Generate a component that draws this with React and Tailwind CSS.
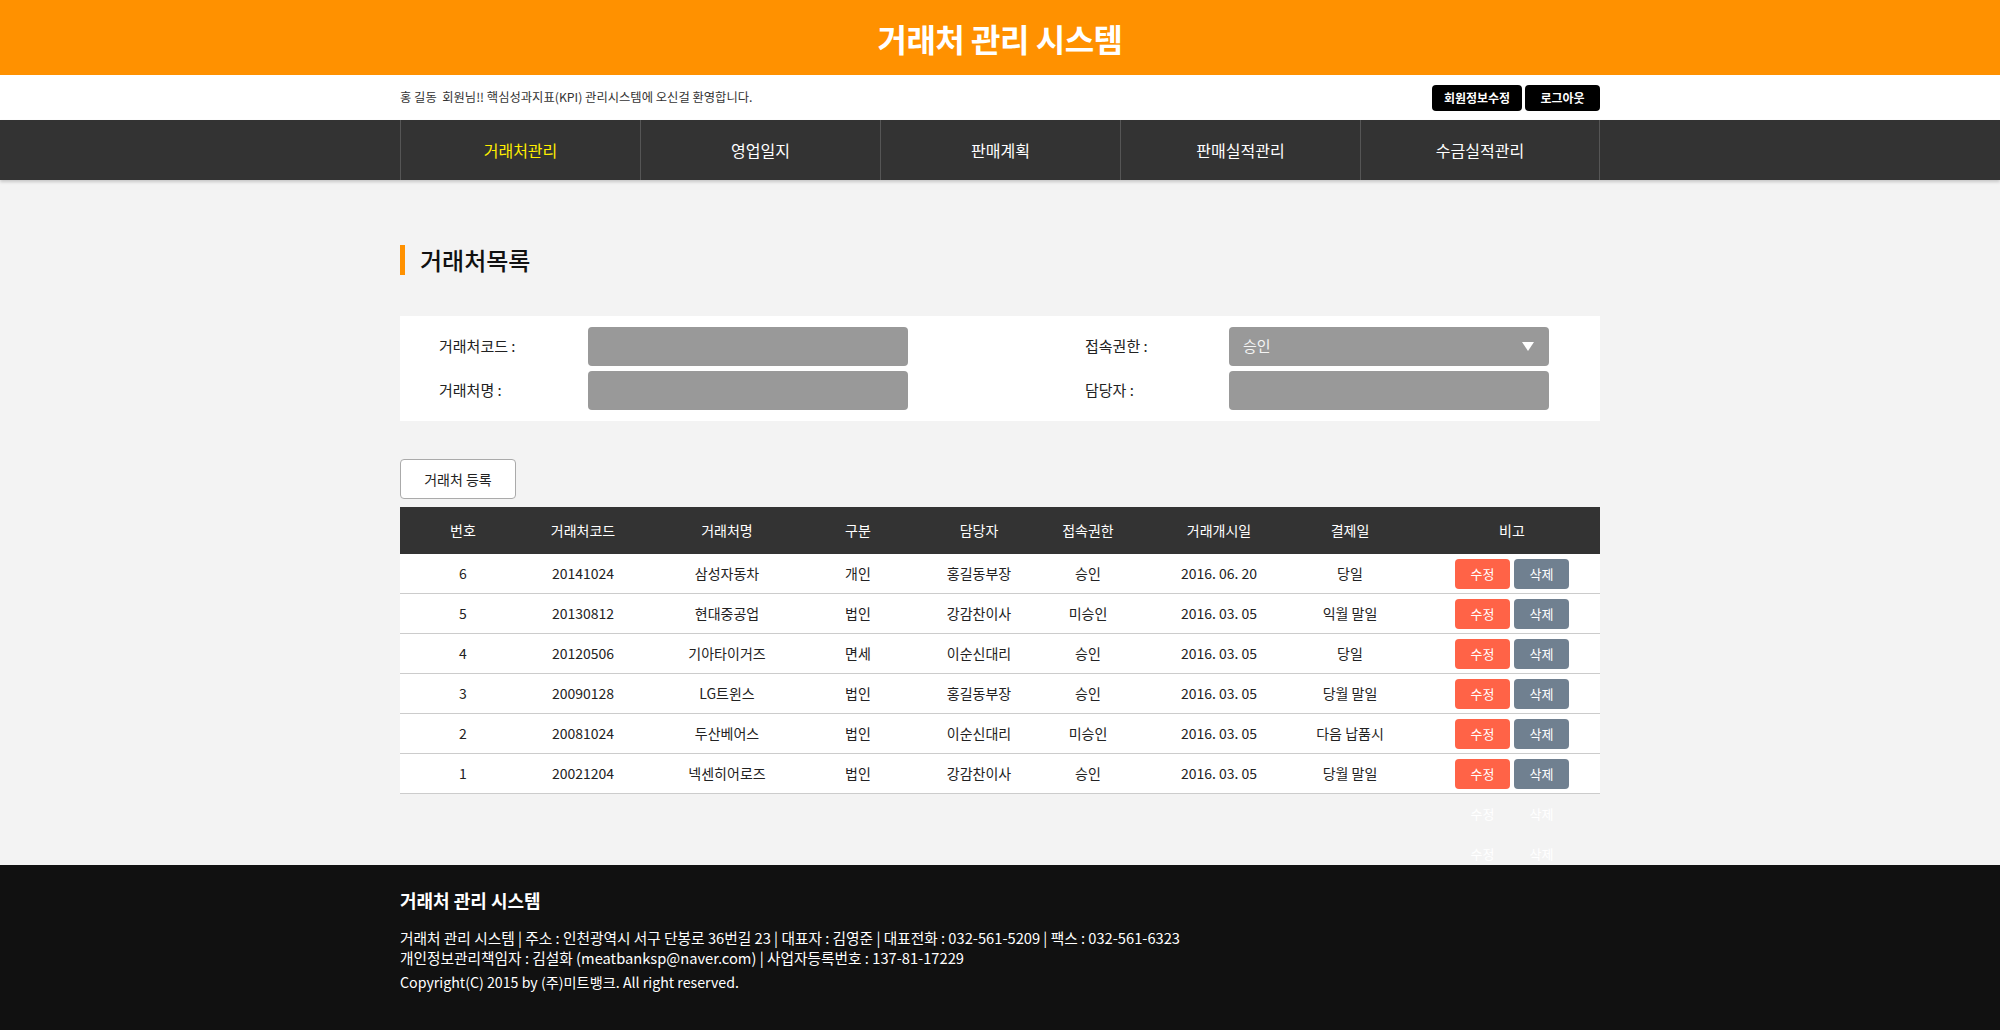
const rows = [
  ['6', '20141024', '삼성자동차', '개인', '홍길동부장', '승인', '2016. 06. 20', '당일'],
  ['5', '20130812', '현대중공업', '법인', '강감찬이사', '미승인', '2016. 03. 05', '익월 말일'],
  ['4', '20120506', '기아타이거즈', '면세', '이순신대리', '승인', '2016. 03. 05', '당일'],
  ['3', '20090128', 'LG트윈스', '법인', '홍길동부장', '승인', '2016. 03. 05', '당월 말일'],
  ['2', '20081024', '두산베어스', '법인', '이순신대리', '미승인', '2016. 03. 05', '다음 납품시'],
  ['1', '20021204', '넥센히어로즈', '법인', '강감찬이사', '승인', '2016. 03. 05', '당월 말일'],
];

const heads = ['번호', '거래처코드', '거래처명', '구분', '담당자', '접속권한', '거래개시일', '결제일'];

const menus = ['거래처관리', '영업일지', '판매계획', '판매실적관리', '수금실적관리'];

// column widths chosen so each cell centre lands where the original does
const grid = 'grid grid-cols-[126px_114px_174px_88px_154px_64px_198px_64px_218px]';

function Cell({ children }) {
  return <div className="flex items-center justify-center whitespace-nowrap">{children}</div>;
}

function Actions({ ghost }) {
  return (
    <div className="flex items-center justify-center gap-[4px] pl-[42px]">
      <button
        type="button"
        className={
          ghost
            ? 'h-[30px] w-[55px] rounded-[4px] text-[13px] text-white'
            : 'h-[30px] w-[55px] rounded-[4px] bg-[#ff6347] text-[13px] text-white'
        }
      >
        수정
      </button>
      <button
        type="button"
        className={
          ghost
            ? 'h-[30px] w-[55px] rounded-[4px] text-[13px] text-white'
            : 'h-[30px] w-[55px] rounded-[4px] bg-[#708090] text-[13px] text-white'
        }
      >
        삭제
      </button>
    </div>
  );
}

export default function App() {
  return (
    <div className="min-h-screen bg-[#f3f3f3] font-['Noto_Sans_CJK_KR',sans-serif] text-[#222]">
      <header className="flex h-[75px] items-center justify-center bg-[#ff9100]">
        <h1 className="text-[32px] font-bold tracking-[-0.5px] text-white">거래처 관리 시스템</h1>
      </header>

      <div className="h-[45px] bg-white">
        <div className="mx-auto flex h-full w-[1200px] items-center justify-between">
          <p className="text-[12.3px] text-[#333]">홍 길동&nbsp; 회원님!! 핵심성과지표(KPI) 관리시스템에 오신걸 환영합니다.</p>
          <div className="flex gap-[3px]">
            <button type="button" className="h-[26px] w-[90px] rounded-[4px] bg-black text-[12px] font-bold text-white">
              회원정보수정
            </button>
            <button type="button" className="h-[26px] w-[75px] rounded-[4px] bg-black text-[12px] font-bold text-white">
              로그아웃
            </button>
          </div>
        </div>
      </div>

      <nav className="relative h-[60px] bg-[#333] shadow-[0_2px_3px_rgba(0,0,0,0.18)]">
        <ul className="mx-auto grid h-full w-[1200px] grid-cols-5">
          {menus.map((m, i) => (
            <li
              key={m}
              className={
                i === menus.length - 1
                  ? 'flex items-center justify-center border-x border-[#555] text-[16px] text-white'
                  : 'flex items-center justify-center border-l border-[#555] text-[16px] ' +
                    (i === 0 ? 'text-[#ffee00]' : 'text-white')
              }
            >
              {m}
            </li>
          ))}
        </ul>
      </nav>

      <main className="h-[685px] overflow-hidden">
        <div className="mx-auto w-[1200px] pt-[65px]">
          <h2 className="flex h-[30px] items-center border-l-[5px] border-[#ff9100] pl-[15px] text-[24px] font-medium text-[#111]">
            거래처목록
          </h2>

          <div className="mt-[41px] flex flex-col gap-[5px] bg-white py-[11px] pl-[39px] text-[15px] text-[#222]">
            <div className="flex items-center">
              <span className="w-[149px]">거래처코드 :</span>
              <div className="h-[39px] w-[320px] rounded-[4px] bg-[#999]" />
              <span className="ml-[177px] w-[144px]">접속권한 :</span>
              <div className="flex h-[39px] w-[320px] items-center justify-between rounded-[4px] bg-[#999] pl-[14px] pr-[15px] text-[15px] text-[#f4f4f4]">
                <span>승인</span>
                <svg width="12" height="9" viewBox="0 0 12 9">
                  <path d="M0 0h12L6 9z" fill="#fff" />
                </svg>
              </div>
            </div>
            <div className="flex items-center">
              <span className="w-[149px]">거래처명 :</span>
              <div className="h-[39px] w-[320px] rounded-[4px] bg-[#999]" />
              <span className="ml-[177px] w-[144px]">담당자 :</span>
              <div className="h-[39px] w-[320px] rounded-[4px] bg-[#999]" />
            </div>
          </div>

          <button
            type="button"
            className="mt-[38px] h-[40px] w-[116px] rounded-[4px] border border-[#aaa] bg-white text-[14px] text-[#222]"
          >
            거래처 등록
          </button>

          <div className="mt-[8px] text-[14px]">
            <div className={grid + ' h-[47px] bg-[#333] text-white'}>
              {heads.map((h) => (
                <Cell key={h}>{h}</Cell>
              ))}
              <div className="flex items-center justify-center pl-[42px]">비고</div>
            </div>
            {rows.map((r) => (
              <div key={r[0]} className={grid + ' h-[40px] border-b border-[#ccc] bg-white'}>
                {r.map((c, j) => (
                  <Cell key={j}>{c}</Cell>
                ))}
                <Actions />
              </div>
            ))}
            {[0, 1].map((k) => (
              <div key={k} className={grid + ' h-[40px]'}>
                <div className="col-start-9 flex items-center justify-center">
                  <Actions ghost />
                </div>
              </div>
            ))}
          </div>
        </div>
      </main>

      <footer className="h-[165px] bg-[#111] text-white">
        <div className="mx-auto w-[1200px] pt-[24px]">
          <h3 className="text-[18px] leading-[22px] font-bold">거래처 관리 시스템</h3>
          <p className="mt-[17px] text-[14.7px] leading-[20px]">
            거래처 관리 시스템 | 주소 : 인천광역시 서구 단봉로 36번길 23 | 대표자 : 김영준 | 대표전화 : 032-561-5209 | 팩스 : 032-561-6323
          </p>
          <p className="text-[14.7px] leading-[20px]">
            개인정보관리책임자 : 김설화 (meatbanksp@naver.com) | 사업자등록번호 : 137-81-17229
          </p>
          <p className="mt-[4px] text-[14.2px] leading-[20px]">Copyright(C) 2015 by (주)미트뱅크. All right reserved.</p>
        </div>
      </footer>
    </div>
  );
}
